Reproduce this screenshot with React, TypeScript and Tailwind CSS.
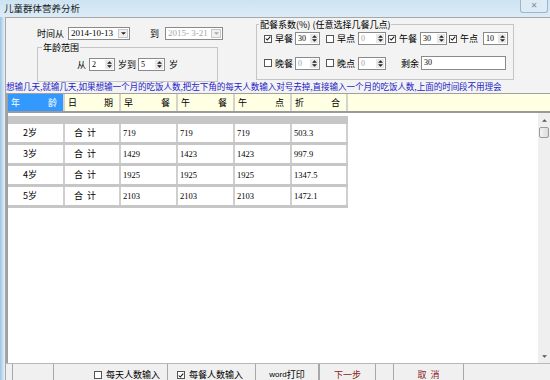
const CJK = "font-['Noto_Sans_CJK_SC','Noto_Sans',sans-serif]";

function Check({ on }: { on?: boolean }) {
  return (
    <span className="inline-flex h-[8px] w-[8px] shrink-0 items-center justify-center border border-[#555] bg-white">
      {on && (
        <svg viewBox="0 0 8 8" className="h-[7px] w-[7px]">
          <path d="M1 4 L3 6 L7 1.5" fill="none" stroke="#111" strokeWidth="1.4" />
        </svg>
      )}
    </span>
  );
}

function Spin({ value, className, disabled }: { value: string; className: string; disabled?: boolean }) {
  return (
    <div className={`flex h-[13px] items-stretch border border-[#8a8a8a] bg-white ${className}`}>
      <span
        className={`flex-1 pl-[2px] font-['Liberation_Serif',serif] text-[8px] leading-[11px] ${
          disabled ? 'text-[#a0a0a0]' : 'text-black'
        }`}
      >
        {value}
      </span>
      <div className="my-[1px] mr-[1px] flex w-[8px] flex-col items-center justify-center gap-[1px] bg-[#e8e8e8]">
        <svg viewBox="0 0 6 3" className="h-[3px] w-[5px]">
          <path d="M0 3 L3 0 L6 3 Z" fill="#222" />
        </svg>
        <svg viewBox="0 0 6 3" className="h-[3px] w-[5px]">
          <path d="M0 0 L6 0 L3 3 Z" fill="#222" />
        </svg>
      </div>
    </div>
  );
}

function Combo({ value, className, disabled }: { value: string; className: string; disabled?: boolean }) {
  return (
    <div className={`flex h-[13px] items-stretch border border-[#8a8a8a] bg-white ${className}`}>
      <span
        className={`flex-1 pl-[2px] font-['Liberation_Serif',serif] text-[9px] leading-[11px] ${
          disabled ? 'text-[#a8a8a8]' : 'text-black'
        }`}
      >
        {value}
      </span>
      <div className="my-[1px] mr-[1px] flex w-[10px] items-center justify-center border border-[#c8c8c8] bg-[#f0f0f0]">
        <svg viewBox="0 0 6 3" className="h-[3px] w-[5px]">
          <path d="M0 0 L6 0 L3 3 Z" fill={disabled ? '#a8a8a8' : '#222'} />
        </svg>
      </div>
    </div>
  );
}

const cols = ['w-[57px]', 'w-[56px]', 'w-[57px]', 'w-[57px]', 'w-[57px]', 'w-[56px]'];
const heads: [string, string][] = [
  ['年', '龄'],
  ['日', '期'],
  ['早', '餐'],
  ['午', '餐'],
  ['午', '点'],
  ['折', '合'],
];
const rows = [
  ['2岁', '719', '719', '719', '503.3'],
  ['3岁', '1429', '1423', '1423', '997.9'],
  ['4岁', '1925', '1925', '1925', '1347.5'],
  ['5岁', '2103', '2103', '2103', '1472.1'],
];

export default function App() {
  return (
    <div className={`flex h-[380px] w-[550px] flex-col overflow-hidden bg-[#d5e8f4] text-[9px] text-black ${CJK}`}>
      {/* title bar */}
      <div className="flex h-[17px] shrink-0 items-start justify-between bg-gradient-to-b from-[#cde3f1] to-[#dcecf7]">
        <span className="pl-[4px] pt-[2px] text-[9.5px] leading-[12px] text-[#1a1a1a]">儿童群体营养分析</span>
        <div className="mr-[2px] flex h-[13px] w-[28px] items-center justify-center rounded-b-[3px] border border-t-0 border-[#9fb6c8] bg-[#dcebf5]">
          <span className="font-['DejaVu_Sans',sans-serif] text-[8px] leading-none text-[#8a8a8a]">✕</span>
        </div>
      </div>

      <div className="flex min-h-0 flex-1">
        {/* aero frame */}
        <div className="w-[5px] shrink-0 bg-gradient-to-r from-[#9cc3e3] via-[#c4dcef] to-[#e8f1f8]" />

        <div className="flex min-w-0 flex-1 flex-col border-l border-t border-[#a7a7a7] bg-[#f3f3f3]">
          {/* top controls */}
          <div className="flex h-[62px] shrink-0 items-start">
            <div className="ml-[31px] flex w-[219px] shrink-0 flex-col">
              <div className="mt-[9px] flex h-[13px] items-center">
                <span className="w-[31px] leading-none">时间从</span>
                <Combo value="2014-10-13" className="w-[62px]" />
                <span className="ml-[20px] w-[15px] leading-none">到</span>
                <Combo value="2015- 3-21" className="w-[58px]" disabled />
              </div>
              <fieldset className="mt-[2px] h-[40px] w-[181px] border border-[#c5c5c5]">
                <legend className="ml-[4px] px-[1px] leading-[11px]">年龄范围</legend>
                <div className="mt-[5px] flex items-center">
                  <span className="ml-[39px] w-[12px] leading-none">从</span>
                  <Spin value="2" className="w-[26px]" />
                  <span className="ml-[3px] w-[20px] leading-none">岁到</span>
                  <Spin value="5" className="w-[27px]" />
                  <span className="ml-[4px] leading-none">岁</span>
                </div>
              </fieldset>
            </div>

            <fieldset className="mt-[1px] h-[61px] w-[258px] shrink-0 border border-[#c5c5c5]">
              <legend className="ml-[2px] px-[1px] leading-[11px]">配餐系数(%) (任意选择几餐几点)</legend>
              <div className="ml-[7px] mt-[2px] flex items-center">
                <Check on />
                <span className="ml-[3px] w-[20px] leading-none">早餐</span>
                <Spin value="30" className="w-[25px]" />
                <span className="ml-[6px]" />
                <Check />
                <span className="ml-[3px] w-[21px] leading-none">早点</span>
                <Spin value="0" className="w-[28px]" disabled />
                <span className="ml-[2px]" />
                <Check on />
                <span className="ml-[3px] w-[21px] leading-none">午餐</span>
                <Spin value="30" className="w-[27px]" />
                <span className="ml-[2px]" />
                <Check on />
                <span className="ml-[3px] w-[23px] leading-none">午点</span>
                <Spin value="10" className="w-[25px]" />
              </div>
              <div className="ml-[7px] mt-[11px] flex items-center">
                <Check />
                <span className="ml-[3px] w-[20px] leading-none">晚餐</span>
                <Spin value="0" className="w-[25px]" disabled />
                <span className="ml-[6px]" />
                <Check />
                <span className="ml-[3px] w-[21px] leading-none">晚点</span>
                <Spin value="0" className="w-[28px]" disabled />
                <span className="ml-[15px] w-[20px] leading-none">剩余</span>
                <div className="flex h-[14px] w-[85px] items-center border border-[#8a8a8a] bg-white pl-[2px] font-['Liberation_Serif',serif] text-[8px]">
                  30
                </div>
              </div>
            </fieldset>
          </div>

          {/* hint line */}
          <div className="h-[13px] shrink-0 whitespace-nowrap text-[8.6px] leading-[13px] tracking-[-0.1px] text-[#2323c8]">
            想输几天,就输几天,如果想输一个月的吃饭人数,把左下角的每天人数输入对号去掉,直接输入一个月的吃饭人数,上面的时间段不用理会
          </div>

          {/* grid */}
          <div className="flex h-[270px] shrink-0 flex-col border-l-2 border-t border-[#a0a0a0] bg-white">
            <div className="flex h-[17px] shrink-0 bg-[#ffffe4]">
              {heads.map(([a, b], i) => (
                <div
                  key={i}
                  className={`flex ${cols[i]} items-center justify-between border-r-2 border-[#d4d4cc] pl-[3px] pr-[6px] ${
                    i === 0 ? 'bg-[#3399ff] text-white' : ''
                  }`}
                >
                  <span>{a}</span>
                  <span>{b}</span>
                </div>
              ))}
            </div>
            <div className="h-[2px] shrink-0 bg-[#9a9a9a]" />
            <div className="flex min-h-0 flex-1">
              <div className="flex-1 pt-[3px]">
                <div className="h-[8px] w-[340px] bg-[#c6c6c6]" />
                {rows.map((r, ri) => (
                  <div key={ri} className="flex w-[340px] flex-col">
                    <div className="flex h-[18px]">
                      <div className={`${cols[0]} flex items-center border-r-2 border-[#cfcfcf] pl-[15px]`}>{r[0]}</div>
                      <div className={`${cols[1]} flex items-center border-r-2 border-[#cfcfcf] pl-[9px]`}>合&nbsp;&nbsp;计</div>
                      {r.slice(1).map((v, ci) => (
                        <div
                          key={ci}
                          className={`${cols[ci + 2]} flex items-center border-r-2 border-[#cfcfcf] pl-[2px] font-['Liberation_Serif',serif] text-[8.5px]`}
                        >
                          {v}
                        </div>
                      ))}
                    </div>
                    <div className="h-[3px] bg-[#c6c6c6]" />
                  </div>
                ))}
              </div>
              {/* scrollbar */}
              <div className="flex w-[12px] shrink-0 flex-col items-center bg-[#efefef]">
                <div className="flex h-[14px] items-center">
                  <svg viewBox="0 0 6 3" className="h-[3px] w-[5px]">
                    <path d="M0 3 L3 0 L6 3 Z" fill="#555" />
                  </svg>
                </div>
                <div className="h-[11px] w-[10px] rounded-[2px] border border-[#9a9a9a] bg-gradient-to-r from-[#f4f4f4] to-[#dcdcdc]" />
                <div className="flex-1" />
                <div className="flex h-[14px] items-center">
                  <svg viewBox="0 0 6 3" className="h-[3px] w-[5px]">
                    <path d="M0 0 L6 0 L3 3 Z" fill="#555" />
                  </svg>
                </div>
              </div>
            </div>
          </div>

          {/* bottom bar */}
          <div className="flex min-h-0 flex-1 items-stretch border-t border-[#b8b8b8] bg-[#f0f0f0]">
            <div className="w-[7px] border-r border-[#a8a8a8]" />
            <div className="w-[41px] border-r border-[#a8a8a8]" />
            <div className="flex w-[114px] items-center border-r border-[#a8a8a8] pl-[40px] pt-[6px]">
              <Check />
              <span className="ml-[4px]">每天人数输入</span>
            </div>
            <div className="flex w-[88px] items-center border-r border-[#a8a8a8] pl-[9px] pt-[6px]">
              <Check on />
              <span className="ml-[4px]">每餐人数输入</span>
            </div>
            <div className="flex w-[63px] items-center justify-center border-r border-[#a8a8a8] pt-[6px]">
              <span className="font-['Liberation_Sans',sans-serif] text-[8px]">word</span>
              <span>打印</span>
            </div>
            <div className="flex w-[57px] items-center justify-center border-l border-r border-[#a8a8a8] pt-[6px] text-[#8b1a1a]">
              下一步
            </div>
            <div className="w-[18px] border-r border-[#a8a8a8]" />
            <div className="flex w-[70px] items-center justify-center border-r border-[#a8a8a8] pt-[6px] text-[#8b1a1a]">
              取&nbsp;&nbsp;消
            </div>
            <div className="flex-1" />
          </div>
        </div>
      </div>
    </div>
  );
}
